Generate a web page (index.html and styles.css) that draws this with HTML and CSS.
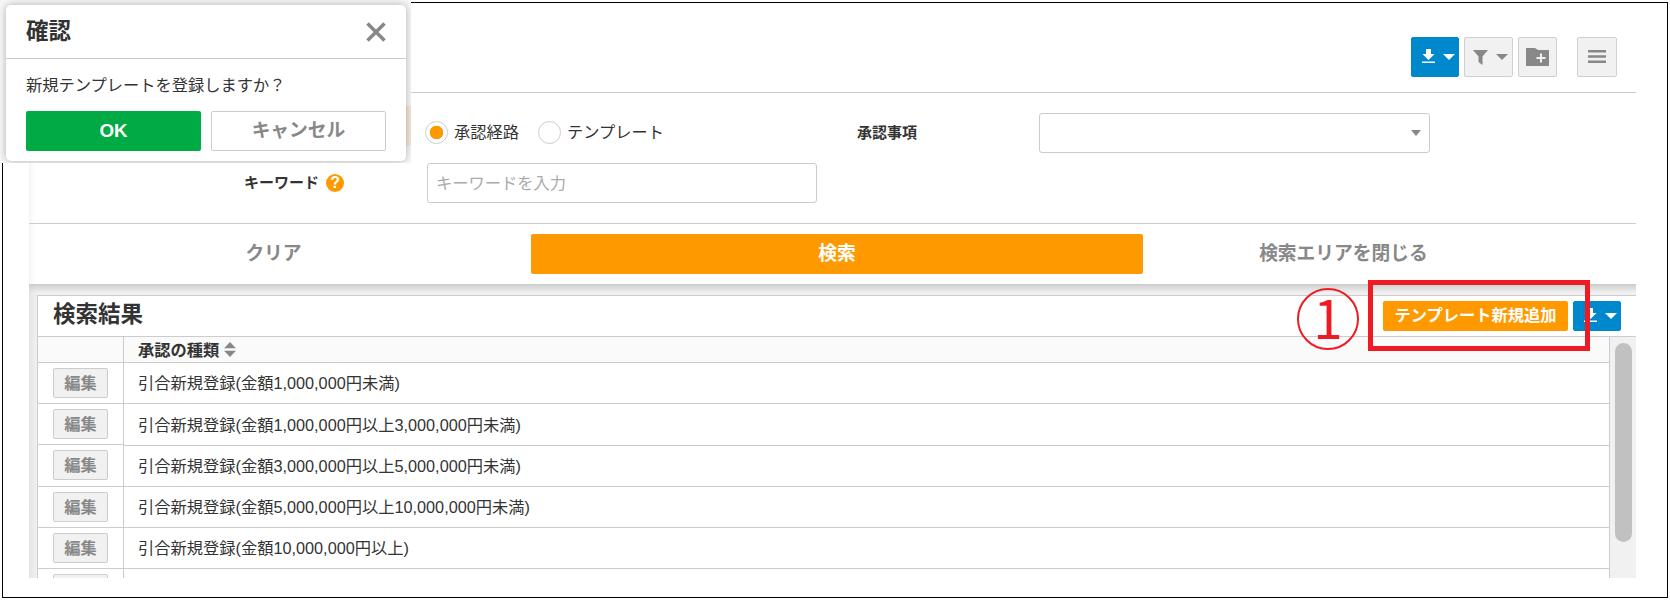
FILE: index.html
```html
<!doctype html>
<html lang="ja">
<head>
    <meta charset="UTF-8">
    <meta name="viewport" content="width=device-width, initial-scale=1.0">
    <title>承認経路</title>
    <link rel="stylesheet" href="styles.css">
</head>
<body>
    <div class="frame">
        <div class="app">
            <div class="toolbar">
                <button class="tool blue">
                    <svg width="13" height="14" viewBox="0 0 13 14"><path d="M4 0h5v5h3.500L6.500 11 .5 5H4zM0 12.500h13V14H0z"/></svg>
                    <span class="caret"></span>
                </button>
                <button class="tool filter">
                    <svg width="15" height="15" viewBox="0 0 15 15"><path d="M0 0h15L9.500 6.500V15L5.500 12V6.500z"/></svg>
                    <span class="caret"></span>
                </button>
                <button class="tool folder">
                    <svg width="23" height="18" viewBox="0 0 23 18"><path d="M0 0h9l3 2h11v16H0z"/><path class="plus" d="M14 5.500h2v3.500h3.500v2H16v3.500h-2V11h-3.500V9H14z"/></svg>
                </button>
                <button class="tool menu">
                    <svg width="18" height="13" viewBox="0 0 18 13"><path d="M0 0h18v2.500H0zM0 5.200h18v2.500H0zM0 10.400h18v2.500H0z"/></svg>
                </button>
            </div>

            <div class="search">
                <div class="field">
                    <div class="label"></div>
                    <div class="radios">
                        <span class="radio on"></span><span class="radio-text">承認経路</span>
                        <span class="radio"></span><span class="radio-text">テンプレート</span>
                    </div>
                </div>
                <div class="field">
                    <div class="label narrow">承認事項</div>
                    <div class="select"><span class="caret small"></span></div>
                </div>
                <div class="field">
                    <div class="label">キーワード<span class="help">?</span></div>
                    <input type="text" class="keyword" placeholder="キーワードを入力">
                </div>
            </div>

            <div class="actions">
                <button class="link clear">クリア</button>
                <button class="submit">検索</button>
                <button class="link close">検索エリアを閉じる</button>
            </div>

            <div class="result-area">
                <div class="panel">
                    <div class="panel-head">
                        <h2>検索結果</h2>
                        <button class="add">テンプレート新規追加</button>
                        <button class="tool blue low">
                            <svg width="13" height="14" viewBox="0 0 13 14"><path d="M4 0h5v5h3.500L6.500 11 .5 5H4zM0 12.500h13V14H0z"/></svg>
                            <span class="caret"></span>
                        </button>
                    </div>
                    <div class="grid">
                        <div class="col-edit">
                            <div class="th"></div>
                            <div class="td"><button class="edit">編集</button></div>
                            <div class="td"><button class="edit">編集</button></div>
                            <div class="td"><button class="edit">編集</button></div>
                            <div class="td"><button class="edit">編集</button></div>
                            <div class="td"><button class="edit">編集</button></div>
                            <div class="td"><button class="edit"></button></div>
                        </div>
                        <div class="col-name">
                            <div class="th">承認の種類
                                <svg width="12" height="15" viewBox="0 0 12 15"><path d="M6 0l6 6.300H0zM6 15L0 8.700h12z"/></svg>
                            </div>
                            <div class="td">引合新規登録(金額1,000,000円未満)</div>
                            <div class="td">引合新規登録(金額1,000,000円以上3,000,000円未満)</div>
                            <div class="td">引合新規登録(金額3,000,000円以上5,000,000円未満)</div>
                            <div class="td">引合新規登録(金額5,000,000円以上10,000,000円未満)</div>
                            <div class="td">引合新規登録(金額10,000,000円以上)</div>
                            <div class="td"></div>
                        </div>
                        <div class="scroll"><div class="thumb"></div></div>
                    </div>
                </div>
            </div>
        </div>
    </div>

    <!-- step marker -->
    <div class="mark-box"></div>
    <div class="mark-num">1</div>

    <!-- confirm dialog -->
    <div class="overlay">
        <div class="dialog">
            <div class="dialog-head">
                <h2>確認</h2>
                <svg width="20" height="20" viewBox="0 0 20 20"><path d="M1.500 1.500l17 17M18.500 1.500l-17 17"/></svg>
            </div>
            <p>新規テンプレートを登録しますか？</p>
            <div class="dialog-buttons">
                <button class="ok">OK</button>
                <button class="cancel">キャンセル</button>
            </div>
        </div>
    </div>
</body>
</html>
```
FILE: styles.css
```css
* {
    box-sizing: border-box;
}

body {
    margin: 0;
    padding: 2px;
    background: #fff;
    color: #333;
    font-family: "Liberation Sans", "Noto Sans CJK JP", sans-serif;
    font-size: 16.25px;
    overflow: hidden;
}

h2 {
    margin: 0;
    font-size: 22.5px;
    line-height: 30px;
}

button {
    display: flex;
    align-items: center;
    justify-content: center;
    margin: 0;
    padding: 0;
    border: none;
    border-radius: 2px;
    font-family: inherit;
    font-weight: bold;
    white-space: nowrap;
}

.frame {
    width: 1666px;
    height: 596px;
    border: 1px solid #000;
    padding: 0 31px 19px 26px;
}

.app {
    height: 575px;
    overflow: hidden;
    display: flex;
    flex-direction: column;
}

/* toolbar */
.toolbar {
    display: flex;
    justify-content: flex-end;
    height: 90px;
    padding: 34px 19px 0 0;
    border-bottom: 1px solid #ccc;
}

.tool {
    height: 40px;
    gap: 8px;
    background: #f1f1f1;
    border: 1px solid #d0d0d0;
}

.tool svg {
    fill: #888;
}

.tool .plus {
    fill: #f1f1f1;
}

.caret {
    border: 6px solid transparent;
    border-top-color: #888;
    border-bottom: 0;
}

.caret.small {
    border-width: 6px 5px 0;
}

.blue {
    width: 48px;
    padding: 0 0 2px 7px;
    background: #08c;
    border-color: #08c;
}

.blue svg {
    fill: #fff;
}

.blue .caret {
    margin-top: 2px;
    border-top-color: #fff;
}

.filter {
    width: 49px;
    margin-left: 5px;
    padding-left: 4px;
}

.folder {
    width: 39px;
    margin-left: 5px;
}

.menu {
    width: 40px;
    margin-left: 20px;
    padding-bottom: 1px;
}

/* search form */
.search {
    display: flex;
    flex-wrap: wrap;
    align-content: flex-start;
    row-gap: 10px;
    height: 131px;
    padding: 20px 0 0 215px;
    border-bottom: 1px solid #ccc;
    background: linear-gradient(to right, #f5f5f5, #fff 6px);
}

.field {
    display: flex;
    align-items: center;
    width: 613px;
    height: 40px;
}

.label {
    display: flex;
    align-items: center;
    width: 183px;
    padding-bottom: 3px;
    font-size: 15px;
    font-weight: bold;
}

.label.narrow {
    width: 182px;
}

.radios {
    display: flex;
    align-items: center;
    margin: 0 0 2px -2px;
}

.radio {
    width: 23px;
    height: 23px;
    border: 1px solid #ccc;
    border-radius: 50%;
}

.radio.on {
    background: radial-gradient(circle, #f90 6.5px, #fff 7px);
}

.radio-text {
    margin: 0 19px 2px 6px;
}

.select {
    display: flex;
    align-items: center;
    justify-content: flex-end;
    width: 391px;
    height: 40px;
    padding-right: 8px;
    border: 1px solid #ccc;
    border-radius: 3px;
}

.keyword {
    width: 390px;
    height: 40px;
    padding: 0 8px;
    border: 1px solid #ccc;
    border-radius: 3px;
    font-family: inherit;
    font-size: 16.25px;
}

.keyword::placeholder {
    color: #aaa;
}

.help {
    width: 18px;
    height: 18px;
    margin: 2px 0 0 7px;
    border-radius: 50%;
    background: #f90;
    color: #fff;
    font-size: 16px;
    line-height: 18px;
    text-align: center;
}

/* search buttons */
.actions {
    display: flex;
    height: 60px;
    flex: none;
    padding: 10px 4px 0 12px;
    background: linear-gradient(to right, #f5f5f5, #fff 6px);
}

.link {
    height: 40px;
    padding-bottom: 5px;
    background: none;
    color: #888;
    font-size: 18.75px;
}

.clear {
    width: 465px;
    margin-right: 25px;
}

.close {
    width: 401px;
}

.submit {
    width: 612px;
    height: 40px;
    padding-bottom: 5px;
    background: #f90;
    color: #fff;
    font-size: 18.75px;
}

/* results */
.result-area {
    flex: 1;
    min-height: 0;
    padding: 10px 0 0 8px;
    border-top: 1px solid #ccc;
    background: linear-gradient(#d2d2d2, rgba(238, 238, 238, 0) 8px), linear-gradient(to right, #e4e4e4, #f1f1f1 8px);
}

.panel {
    height: 300px;
    border: 1px solid #ccc;
    border-width: 1px 0 0 1px;
    background: #fff;
}

.panel-head {
    display: flex;
    height: 41px;
    padding: 5px 15px 0 15px;
    border-bottom: 1px solid #ccc;
}

.panel-head h2 {
    flex: 1;
    margin-top: -1px;
}

.add {
    width: 185px;
    height: 30px;
    margin-right: 5px;
    padding-bottom: 4px;
    background: #f90;
    color: #fff;
    font-size: 16.25px;
}

.low {
    height: 30px;
}

.grid {
    display: flex;
}

.col-edit {
    width: 86px;
    border-right: 1px solid #ccc;
}

.col-name {
    flex: 1;
}

.th {
    display: flex;
    align-items: center;
    height: 26px;
    padding-bottom: 2px;
    border-bottom: 1px solid #ccc;
    background: #fafafa;
    font-weight: bold;
}

.th svg {
    margin: 1px 0 0 5px;
    fill: #888;
}

.td {
    display: flex;
    align-items: center;
    height: 41px;
    border-bottom: 1px solid #ccc;
}

.col-name .th {
    padding-left: 14px;
}

.col-name .td {
    padding: 0 0 2px 14px;
}

.col-edit .td {
    align-items: flex-start;
    padding: 5px 0 0 15px;
}

.col-name .td:nth-child(3),
.col-edit .td:nth-child(4) {
    height: 42px;
}

.edit {
    width: 55px;
    height: 30px;
    padding-bottom: 2px;
    border: 1px solid #ccc;
    background: #f1f1f1;
    color: #888;
    font-size: 16.25px;
}

.scroll {
    width: 27px;
    height: 260px;
    padding: 6px 0 0 5px;
    border-left: 1px solid #ccc;
    background: #f1f1f1;
}

.thumb {
    width: 17px;
    height: 199px;
    border-radius: 9px;
    background: #c1c1c1;
}

/* step marker */
.mark-box {
    position: absolute;
    left: 1368px;
    top: 280px;
    width: 222px;
    height: 71px;
    border: 5px solid #ed1c24;
}

.mark-num {
    position: absolute;
    left: 1297px;
    top: 288px;
    width: 62px;
    height: 62px;
    border: 2px solid #ed1c24;
    border-radius: 50%;
    color: #ed1c24;
    font-family: "Noto Sans CJK JP", sans-serif;
    font-size: 53px;
    line-height: 53px;
    text-align: center;
}

/* confirm dialog */
.overlay {
    position: absolute;
    left: 0;
    top: 0;
    width: 411px;
    height: 163px;
    overflow: hidden;
    padding: 5px 5px 2px 6px;
    background: linear-gradient(#f6e8d8, #f6e8d8) 406px 106px / 5px 40px no-repeat #f8f8f8;
}

.dialog {
    width: 400px;
    height: 156px;
    border-radius: 5px;
    background: #fff;
    box-shadow: 0 0 8px rgba(0, 0, 0, 0.3);
}

.dialog-head {
    display: flex;
    align-items: center;
    justify-content: space-between;
    height: 54px;
    padding: 0 20px;
    border-bottom: 1px solid #ccc;
}

.dialog-head svg {
    fill: none;
    stroke: #888;
    stroke-width: 3.5;
}

.dialog p {
    margin: 14px 20px 13px;
    line-height: 25px;
}

.dialog-buttons {
    display: flex;
    gap: 10px;
    padding: 0 20px;
}

.ok,
.cancel {
    width: 175px;
    height: 40px;
    font-size: 18.75px;
}

.ok {
    padding-bottom: 1px;
    background: #0a4;
    color: #fff;
}

.cancel {
    padding-bottom: 5px;
    border: 1px solid #ccc;
    background: #fff;
    color: #888;
}
```
